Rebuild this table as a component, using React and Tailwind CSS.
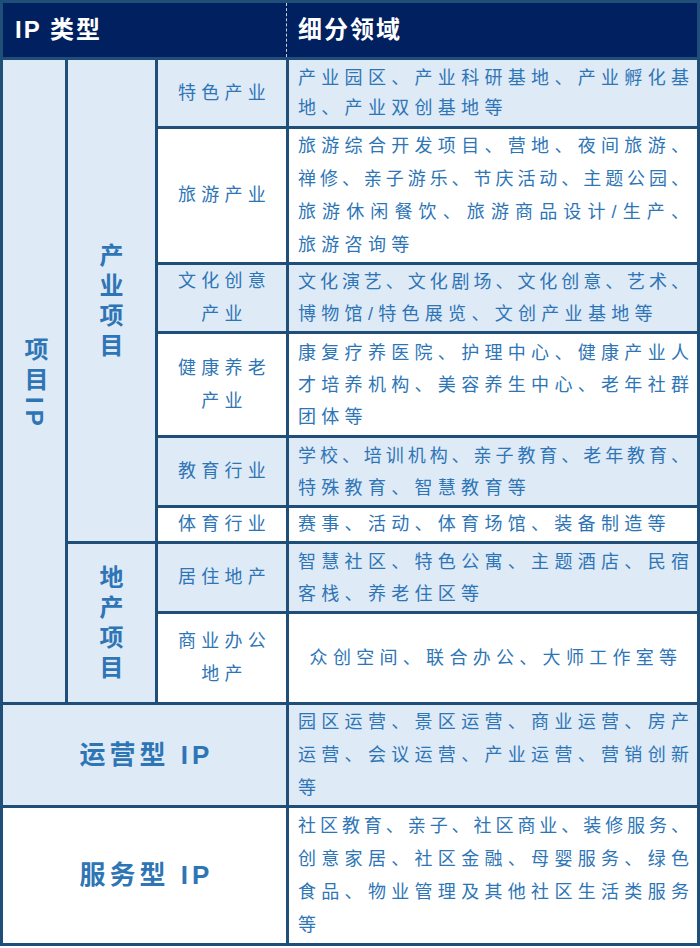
import React from "react";

const LIGHT = "bg-[#deeaf6]";
const WHITE = "bg-white";

function Label({ lines, bg }) {
  return (
    <div
      className={`${bg} flex flex-col items-center justify-center pl-[5px] text-[18px] leading-[33px] tracking-[5.3px] text-[#2e75b6]`}
    >
      {lines.map((l, i) => (
        <div key={i}>{l}</div>
      ))}
    </div>
  );
}

function Detail({ lines, bg, lh = "leading-[32px]", center = false }) {
  return (
    <div
      className={`${bg} ${lh} flex flex-col justify-center pl-[9px] pr-[8px] text-[18px] text-[#2e75b6]`}
    >
      {lines.map((l, i) => {
        const last = i === lines.length - 1;
        const cls = center
          ? "text-center pl-[5px] tracking-[5.3px]"
          : last
          ? "tracking-[5.3px]"
          : "text-justify [text-align-last:justify]";
        return (
          <div key={i} className={cls}>
            {l}
          </div>
        );
      })}
    </div>
  );
}

function Stack({ chars }) {
  return (
    <div className="flex flex-col items-center text-[24px] font-bold leading-[30px] text-[#2e75b6]">
      {chars.map((c, i) => (
        <span key={i}>{c}</span>
      ))}
    </div>
  );
}

export default function App() {
  return (
    <div className="w-[700px] h-[948px] bg-white font-['Liberation_Sans','Noto_Sans_CJK_SC',sans-serif]">
      <div className="grid w-[700px] grid-cols-[62px_87px_128px_408px] grid-rows-[54px_66px_133px_66px_101px_67px_33px_67px_88px_100px_135px] gap-[3px] bg-[#1f4e79] p-[3px]">
        {/* Header */}
        <div className="col-span-4 flex bg-[#002060] text-[24px] font-bold tracking-[2px] text-white">
          <div className="flex w-[283px] items-center pl-[12px]">IP 类型</div>
          <div className="flex flex-1 items-center border-l border-dashed border-[#c8d0dc] pl-[11px]">
            细分领域
          </div>
        </div>

        {/* 项目IP */}
        <div className={`${LIGHT} row-span-8 flex items-center justify-center pt-[6px]`}>
          <div className="text-[24px] font-bold leading-none tracking-[6px] text-[#2e75b6] [writing-mode:vertical-rl]">
            项目IP
          </div>
        </div>

        {/* 产业项目 */}
        <div className={`${LIGHT} row-span-6 flex items-center justify-center`}>
          <Stack chars={["产", "业", "项", "目"]} />
        </div>

        <Label lines={["特色产业"]} bg={LIGHT} />
        <Detail
          bg={LIGHT}
          lh="leading-[30px]"
          lines={["产业园区、产业科研基地、产业孵化基", "地、产业双创基地等"]}
        />

        <Label lines={["旅游产业"]} bg={WHITE} />
        <Detail
          bg={WHITE}
          lh="leading-[33px]"
          lines={[
            "旅游综合开发项目、营地、夜间旅游、",
            "禅修、亲子游乐、节庆活动、主题公园、",
            "旅游休闲餐饮、旅游商品设计/生产、",
            "旅游咨询等",
          ]}
        />

        <Label lines={["文化创意", "产业"]} bg={LIGHT} />
        <Detail
          bg={LIGHT}
          lines={["文化演艺、文化剧场、文化创意、艺术、", "博物馆/特色展览、文创产业基地等"]}
        />

        <Label lines={["健康养老", "产业"]} bg={WHITE} />
        <Detail
          bg={WHITE}
          lines={[
            "康复疗养医院、护理中心、健康产业人",
            "才培养机构、美容养生中心、老年社群",
            "团体等",
          ]}
        />

        <Label lines={["教育行业"]} bg={LIGHT} />
        <Detail
          bg={LIGHT}
          lines={["学校、培训机构、亲子教育、老年教育、", "特殊教育、智慧教育等"]}
        />

        <Label lines={["体育行业"]} bg={WHITE} />
        <Detail bg={WHITE} lh="leading-[33px]" lines={["赛事、活动、体育场馆、装备制造等"]} />

        {/* 地产项目 */}
        <div className={`${LIGHT} row-span-2 flex items-center justify-center`}>
          <Stack chars={["地", "产", "项", "目"]} />
        </div>

        <Label lines={["居住地产"]} bg={LIGHT} />
        <Detail
          bg={LIGHT}
          lines={["智慧社区、特色公寓、主题酒店、民宿", "客栈、养老住区等"]}
        />

        <Label lines={["商业办公", "地产"]} bg={WHITE} />
        <Detail bg={WHITE} center lines={["众创空间、联合办公、大师工作室等"]} />

        {/* 运营型 IP */}
        <div
          className={`${LIGHT} col-span-3 flex items-center justify-center pl-[4px] text-[26px] font-bold tracking-[4px] text-[#2e75b6]`}
        >
          运营型 IP
        </div>
        <Detail
          bg={LIGHT}
          lh="leading-[33px]"
          lines={[
            "园区运营、景区运营、商业运营、房产",
            "运营、会议运营、产业运营、营销创新",
            "等",
          ]}
        />

        {/* 服务型 IP */}
        <div
          className={`${WHITE} col-span-3 flex items-center justify-center pl-[4px] text-[26px] font-bold tracking-[4px] text-[#2e75b6]`}
        >
          服务型 IP
        </div>
        <Detail
          bg={WHITE}
          lh="leading-[33px]"
          lines={[
            "社区教育、亲子、社区商业、装修服务、",
            "创意家居、社区金融、母婴服务、绿色",
            "食品、物业管理及其他社区生活类服务",
            "等",
          ]}
        />
      </div>
    </div>
  );
}
